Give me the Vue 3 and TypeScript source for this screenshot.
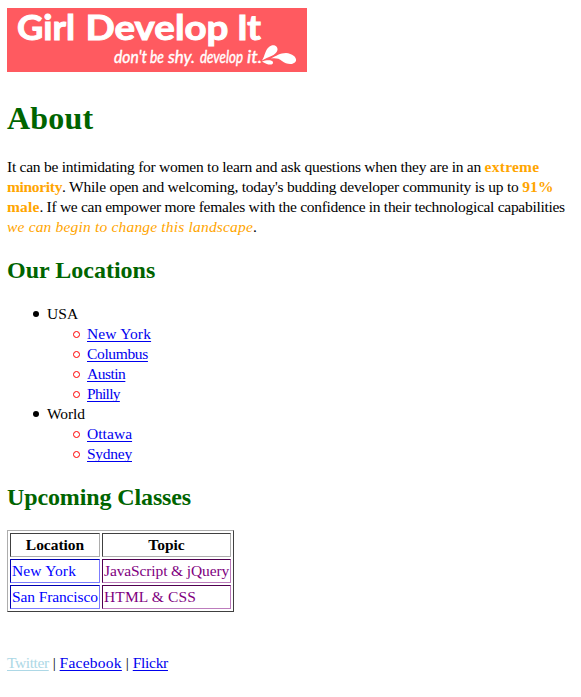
<script setup lang="ts">
interface Label {
  text: string
  tracking: number
}

interface Region {
  name: Label
  cities: Label[]
}

interface ClassRow {
  location: Label
  topic: Label
}

const regions: Region[] = [
  {
    name: { text: 'USA', tracking: 0.1 },
    cities: [
      { text: 'New York', tracking: 0.15 },
      { text: 'Columbus', tracking: -0.35 },
      { text: 'Austin', tracking: -0.5 },
      { text: 'Philly', tracking: -0.7 },
    ],
  },
  {
    name: { text: 'World', tracking: -0.1 },
    cities: [
      { text: 'Ottawa', tracking: 0.05 },
      { text: 'Sydney', tracking: -0.25 },
    ],
  },
]

const classes: ClassRow[] = [
  { location: { text: 'New York', tracking: 0.15 }, topic: { text: 'JavaScript & jQuery', tracking: -0.12 } },
  { location: { text: 'San Francisco', tracking: -0.12 }, topic: { text: 'HTML & CSS', tracking: 0.12 } },
]

const spacing = (label: Label) => ({ letterSpacing: `${label.tracking}px` })
</script>

<template>
  <main class="page">
    <svg class="banner" viewBox="0 0 300 64" role="img" aria-label="Girl Develop It">
      <rect width="300" height="64" fill="#ff5a60" />
      <g class="brand">
        <text x="10" y="31.5" textLength="58" lengthAdjust="spacingAndGlyphs">Girl</text>
        <text x="78.5" y="31.5" textLength="143" lengthAdjust="spacingAndGlyphs">Develop</text>
        <text x="230" y="31.5" textLength="24" lengthAdjust="spacingAndGlyphs">It</text>
      </g>
      <g class="tagline">
        <text x="107" y="55" textLength="33" lengthAdjust="spacingAndGlyphs">don't</text>
        <text x="143" y="55" textLength="14" lengthAdjust="spacingAndGlyphs">be</text>
        <text x="161" y="55" textLength="27" lengthAdjust="spacingAndGlyphs">shy.</text>
        <text x="193" y="55" textLength="43" lengthAdjust="spacingAndGlyphs">develop</text>
        <text x="240" y="55" textLength="15" lengthAdjust="spacingAndGlyphs">it.</text>
      </g>
      <g fill="#fff">
        <path d="M255 52.500C258 48 258 42 262 39C266 35.500 271 38 270.500 42C269 48 261 48.500 255 52.500Z" />
        <path d="M264 50.500C269 48 273 45 279 45C285 45.500 290 49 289 53C286 58 279 56 275 53C272 50.500 269 50 264 50.500Z" />
        <path d="M255 53.500C259 52 265 51.500 266 54C266.500 58 260 57 255 53.500Z" />
      </g>
    </svg>

    <h1>About</h1>
    <p class="intro">
      <span class="line first">It can be intimidating for women to learn and ask questions when they are in an <strong class="extreme">extreme</strong></span>
      <span class="line second"><strong class="minority">minority</strong>. While open and welcoming, today's budding developer community is up to <strong class="share">91%</strong></span>
      <span class="line third"><strong class="male">male</strong>. If we can empower more females with the confidence in their technological capabilities</span>
      <span class="line"><em>we can begin to change this landscape</em>.</span>
    </p>

    <h2>Our Locations</h2>
    <ul class="regions">
      <li v-for="region in regions" :key="region.name.text">
        <span :style="spacing(region.name)">{{ region.name.text }}</span>
        <ul class="cities">
          <li v-for="city in region.cities" :key="city.text"><a href="#" :style="spacing(city)">{{ city.text }}</a></li>
        </ul>
      </li>
    </ul>

    <h2 class="classes-title">Upcoming Classes</h2>
    <table>
      <thead>
        <tr><th>Location</th><th>Topic</th></tr>
      </thead>
      <tbody>
        <tr v-for="row in classes" :key="row.location.text">
          <td class="place" :style="spacing(row.location)">{{ row.location.text }}</td>
          <td class="topic" :style="spacing(row.topic)">{{ row.topic.text }}</td>
        </tr>
      </tbody>
    </table>

    <footer>
      <a class="twitter" href="#">Twitter</a> | <a class="facebook" href="#">Facebook</a> | <a class="flickr" href="#">Flickr</a>
    </footer>
  </main>
</template>

<style>
body {
  background: #fff;
}
</style>

<style scoped>
.page {
  padding: 8px 7px 0;
  font: 15.5px/20px "Liberation Serif", "Times New Roman", serif;
  color: #000;
}
.banner {
  display: block;
  width: 300px;
  height: 64px;
  overflow: visible;
}
.brand {
  font: 700 34.5px "Lato", sans-serif;
  fill: #fff;
  stroke: #fff;
  stroke-width: 1px;
}
.tagline {
  font: italic 400 17px "Lato", cursive;
  fill: #fff;
  stroke: #fff;
  stroke-width: 0.4px;
}
h1,
h2 {
  margin: 0;
  color: #006400;
}
h1 {
  margin-top: 28px;
  font-size: 32px;
  line-height: 36px;
  letter-spacing: 0.2px;
}
h2 {
  font-size: 24px;
  line-height: 28px;
}
.classes-title {
  letter-spacing: -0.12px;
}
.intro {
  margin: 21px 0 19px;
}
.line {
  display: block;
  white-space: nowrap;
}
.first {
  letter-spacing: -0.25px;
}
.second {
  letter-spacing: -0.23px;
}
.third {
  letter-spacing: -0.29px;
}
strong,
em {
  color: orange;
}
.extreme {
  letter-spacing: 0.25px;
}
.minority {
  letter-spacing: -0.33px;
}
.share {
  letter-spacing: 0.2px;
}
.male {
  letter-spacing: 0.15px;
}
em {
  letter-spacing: 0.18px;
}
ul {
  list-style: none;
}
.regions {
  margin: 20px 0 19px;
  padding-left: 40px;
}
.cities {
  margin: 0;
  padding-left: 40px;
}
.regions > li::before,
.cities > li::before {
  content: "";
  display: inline-block;
  box-sizing: border-box;
  border-radius: 50%;
}
.regions > li::before {
  width: 6px;
  height: 6px;
  margin: 0 8px 2px -14px;
  background: #000;
}
.cities > li::before {
  width: 7px;
  height: 7px;
  margin: 0 7px 1px -14px;
  border: 1px solid red;
}
a {
  color: #00e;
  text-decoration: underline 1px;
  text-underline-offset: 2px;
  text-decoration-skip-ink: none;
}
table {
  width: 227px;
  margin-top: 19px;
  table-layout: fixed;
  border: 1px solid;
  border-color: #adadad #404040 #404040 #adadad;
  border-spacing: 2px;
  border-collapse: separate;
}
th,
td {
  height: 20px;
  padding: 1px;
  box-sizing: content-box;
  border: 1px solid;
  border-color: #404040 #adadad #adadad #404040;
  white-space: nowrap;
}
th {
  letter-spacing: -0.03px;
}
th:first-child {
  width: 86px;
}
.place {
  color: #00f;
  border-color: #0000b0 #7c7cff #7c7cff #0000b0;
}
.topic {
  color: purple;
  border-color: #500050 #bd7cbd #bd7cbd #500050;
}
footer {
  margin-top: 41px;
}
.twitter {
  color: lightblue;
  letter-spacing: -0.4px;
}
.facebook {
  letter-spacing: 0.25px;
}
.flickr {
  letter-spacing: -0.3px;
}
</style>
